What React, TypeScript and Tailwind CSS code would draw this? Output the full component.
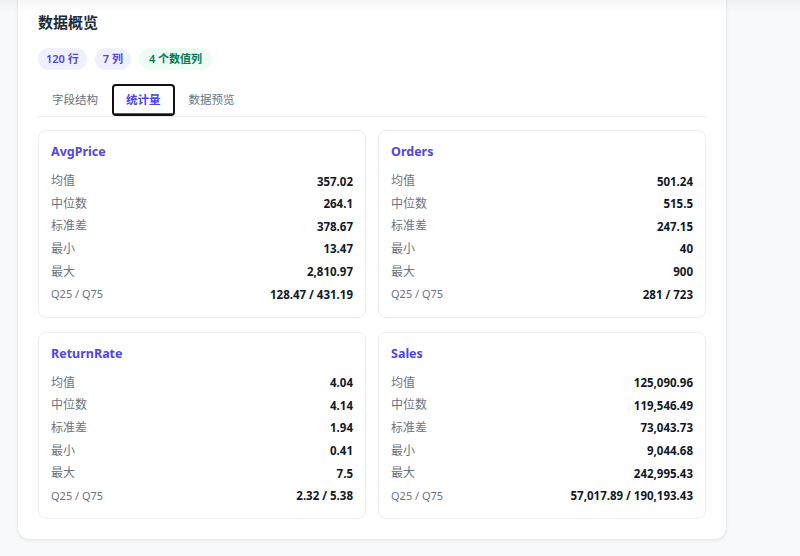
import React from "react";

type Stat = { name: string; rows: [string, string][] };

const stats: Stat[] = [
  {
    name: "AvgPrice",
    rows: [
      ["均值", "357.02"],
      ["中位数", "264.1"],
      ["标准差", "378.67"],
      ["最小", "13.47"],
      ["最大", "2,810.97"],
      ["Q25 / Q75", "128.47 / 431.19"],
    ],
  },
  {
    name: "Orders",
    rows: [
      ["均值", "501.24"],
      ["中位数", "515.5"],
      ["标准差", "247.15"],
      ["最小", "40"],
      ["最大", "900"],
      ["Q25 / Q75", "281 / 723"],
    ],
  },
  {
    name: "ReturnRate",
    rows: [
      ["均值", "4.04"],
      ["中位数", "4.14"],
      ["标准差", "1.94"],
      ["最小", "0.41"],
      ["最大", "7.5"],
      ["Q25 / Q75", "2.32 / 5.38"],
    ],
  },
  {
    name: "Sales",
    rows: [
      ["均值", "125,090.96"],
      ["中位数", "119,546.49"],
      ["标准差", "73,043.73"],
      ["最小", "9,044.68"],
      ["最大", "242,995.43"],
      ["Q25 / Q75", "57,017.89 / 190,193.43"],
    ],
  },
];

function StatCard({ s }: { s: Stat }) {
  return (
    <div className="rounded-lg border border-[#eceef4] bg-white px-3 pt-[11px] pb-[11px]">
      <div className="mb-[8px] text-[12.5px] font-bold leading-5 text-[#4f46e5]">{s.name}</div>
      <div className="flex flex-col">
        {s.rows.map(([k, v]) => (
          <div key={k} className="flex h-[22.6px] items-center justify-between">
            <span className={k.startsWith("Q") ? "text-[11px] text-[#6b7280]" : "text-[12px] text-[#6b7280]"}>{k}</span>
            <span className="text-[11.5px] font-bold text-[#111827]">{v}</span>
          </div>
        ))}
      </div>
    </div>
  );
}

export default function App() {
  return (
    <div
      className="relative min-h-[556px] w-full overflow-hidden bg-[#f8f9fb] pl-[17px]"
      style={{ fontFamily: '"Noto Sans", "Noto Sans CJK SC", sans-serif' }}
    >
      <div className="pointer-events-none absolute inset-x-0 top-0 h-3 bg-gradient-to-b from-[rgba(0,0,0,0.035)] to-transparent" />
      <div className="w-[710px] rounded-b-xl border-x border-b border-[#e9ebf0] bg-white px-5 pt-[11px] pb-5 shadow-[0_1px_3px_rgba(0,0,0,0.06)]">
        <h2 className="text-[15px] font-bold leading-[22px] text-[#1f2937]">数据概览</h2>
        <div className="mt-[15px] flex gap-2">
          <span className="rounded-full bg-[#eef0fe] px-2 py-[3px] text-[11px] font-semibold leading-4 text-[#4f46e5]">120 行</span>
          <span className="rounded-full bg-[#eef0fe] px-2 py-[3px] text-[11px] font-semibold leading-4 text-[#4f46e5]">7 列</span>
          <span className="rounded-full bg-[#ecfdf3] px-2.5 py-[3px] text-[11px] font-semibold leading-4 text-[#047857]">4 个数值列</span>
        </div>
        <div className="mt-[14px] flex border-b border-[#e8edf3]">
          <button className="h-8 px-3.5 text-[11.5px] text-[#6b7280]">字段结构</button>
          <button className="relative h-8 rounded-[4px] px-3.5 text-[11.5px] font-semibold text-[#4f46e5] outline-2 outline-offset-[-2px] outline-[#111111] outline">
            统计量
            <span className="absolute inset-x-[2px] bottom-[2px] h-[1.5px] bg-[#4f46e5]" />
          </button>
          <button className="h-8 px-3.5 text-[11.5px] text-[#6b7280]">数据预览</button>
        </div>
        <div className="mt-[13px] grid grid-cols-2 gap-x-3 gap-y-3.5">
          {stats.map((s) => (
            <StatCard key={s.name} s={s} />
          ))}
        </div>
      </div>
    </div>
  );
}
